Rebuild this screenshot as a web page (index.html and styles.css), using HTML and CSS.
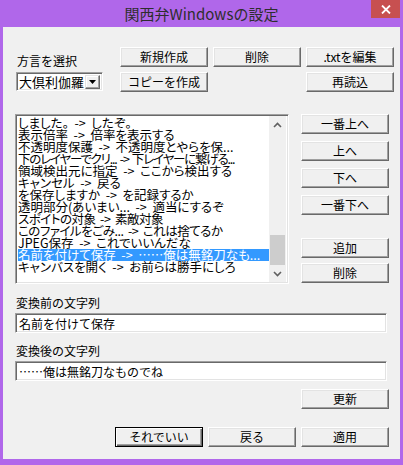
FILE: index.html
```html
<!DOCTYPE html>
<html lang="ja">
<head>
<meta charset="utf-8">
<title>関西弁Windowsの設定</title>
<link rel="stylesheet" href="styles.css">
</head>
<body>
<div class="window">
  <div class="titlebar">
    <span></span>
    <span class="title">関西弁Windowsの設定</span>
    <span class="ctrls">
      <span class="close"><svg width="10" height="9" viewBox="0 0 10 9"><path d="M1 0.5 L9 8.5 M9 0.5 L1 8.5" stroke="#fff" stroke-width="1.8" fill="none"/></svg></span>
    </span>
  </div>
  <div class="client">
    <div class="top">
      <div class="label dialect">方言を選択</div>
      <button class="btn">新規作成</button>
      <button class="btn">削除</button>
      <button class="btn">.txtを編集</button>
      <div class="combo">
        <span class="combo-text">大倶利伽羅</span>
        <span class="combo-btn"><svg width="7" height="4" viewBox="0 0 7 4"><path d="M0 0 H7 L3.5 4 Z" fill="#000"/></svg></span>
      </div>
      <button class="btn">コピーを作成</button>
      <span></span>
      <button class="btn">再読込</button>
    </div>

    <div class="main">
      <div class="list">
        <ul class="items">
          <li>しました。  -&gt;  したぞ。</li>
          <li>表示倍率  -&gt;  倍率を表示する</li>
          <li>不透明度保護  -&gt;  不透明度とやらを保...</li>
          <li class="tight">下のレイヤーでクリ...  -&gt;  下レイヤーに繋げる...</li>
          <li>領域検出元に指定  -&gt;  ここから検出する</li>
          <li>キャンセル  -&gt;  戻る</li>
          <li>を保存しますか  -&gt;  を記録するか</li>
          <li>透明部分(あいまい...  -&gt;  適当にするぞ</li>
          <li class="snug">スポイトの対象  -&gt;  素敵対象</li>
          <li class="snug">このファイルをごみ...  -&gt;  これは捨てるか</li>
          <li>JPEG保存  -&gt;  これでいいんだな</li>
          <li class="selected">名前を付けて保存  -&gt;  ……俺は無銘刀なも...</li>
          <li>キャンバスを開く  -&gt;  お前らは勝手にしろ</li>
        </ul>
        <div class="scrollbar">
          <div class="sb-arrow"><svg width="9" height="6" viewBox="0 0 9 6"><path d="M1 5 L4.5 1.5 L8 5" stroke="#606060" stroke-width="1.6" fill="none"/></svg></div>
          <div class="sb-track"><div class="sb-thumb"></div></div>
          <div class="sb-arrow"><svg width="9" height="6" viewBox="0 0 9 6"><path d="M1 1 L4.5 4.5 L8 1" stroke="#606060" stroke-width="1.6" fill="none"/></svg></div>
        </div>
      </div>
      <div class="side">
        <button class="btn">一番上へ</button>
        <button class="btn">上へ</button>
        <button class="btn">下へ</button>
        <button class="btn">一番下へ</button>
        <button class="btn add">追加</button>
        <button class="btn">削除</button>
      </div>
    </div>

    <div class="label field-label first">変換前の文字列</div>
    <div class="field">名前を付けて保存</div>
    <div class="label field-label">変換後の文字列</div>
    <div class="field">……俺は無銘刀なものでね</div>

    <div class="row update">
      <button class="btn">更新</button>
    </div>
    <div class="row bottom">
      <button class="btn default">それでいい</button>
      <button class="btn">戻る</button>
      <button class="btn">適用</button>
    </div>
  </div>
</div>
</body>
</html>
```

FILE: styles.css
```css
* { box-sizing: border-box; }
html, body {
  margin: 0;
  padding: 0;
}
body {
  width: 403px;
  height: 465px;
  overflow: hidden;
  font-family: "Noto Sans CJK JP", "Liberation Sans", sans-serif;
  font-size: 12px;
  color: #000;
}
.window {
  width: 403px;
  height: 465px;
  background: #b067ea;
  padding: 0 3px 6px 3px;
  display: flex;
  flex-direction: column;
}
.titlebar {
  height: 27px;
  display: grid;
  grid-template-columns: 1fr auto 1fr;
  margin: 0 -3px;
}
.title {
  font-size: 15px;
  line-height: 27px;
  color: #2e2e2e;
}
.ctrls {
  display: flex;
  justify-content: flex-end;
  align-items: flex-start;
  padding-right: 3px;
}
.close {
  width: 29px;
  height: 18px;
  background: #c75050;
  display: flex;
  align-items: center;
  justify-content: center;
}
.client {
  flex: 1;
  background: #f0f0f0;
  padding: 20px 11px 0 12px;
}
.label {
  line-height: 14px;
  white-space: nowrap;
}
.btn {
  font-family: inherit;
  font-size: 12px;
  line-height: 14px;
  color: #000;
  background: #f0f0f0;
  height: 20px;
  width: 88px;
  padding: 0;
  margin: 0;
  border: 1px solid;
  border-color: #fff #696969 #696969 #fff;
  box-shadow: inset -1px -1px #a0a0a0, inset 1px 1px #e3e3e3;
  border-radius: 0;
}
.btn.default {
  border-color: #000;
  box-shadow: inset 1px 1px #fff, inset -1px -1px #696969, inset -2px -2px #a0a0a0;
}
.top {
  display: grid;
  grid-template-columns: 100px 88px 88px 88px;
  column-gap: 5px;
  row-gap: 5px;
}
.dialect {
  align-self: end;
  padding-left: 2px;
  margin-bottom: -1px;
}
.combo {
  width: 87px;
  height: 19px;
  margin-left: 1px;
  background: #fff;
  border: 1px solid;
  border-color: #a0a0a0 #fff #fff #a0a0a0;
  box-shadow: inset 1px 1px #696969, inset -1px -1px #e3e3e3;
  display: flex;
  align-items: center;
  padding: 2px 2px 1px 2px;
}
.combo-text {
  flex: 1;
  line-height: 14px;
  font-size: 13px;
}
.combo-btn {
  width: 15px;
  height: 14px;
  background: #f0f0f0;
  border: 1px solid;
  border-color: #e3e3e3 #696969 #696969 #e3e3e3;
  box-shadow: inset -1px -1px #a0a0a0, inset 1px 1px #fff;
  display: flex;
  align-items: center;
  justify-content: center;
}
.main {
  display: grid;
  grid-template-columns: 274px 88px;
  column-gap: 12px;
  margin-top: 22px;
}
.list {
  height: 170px;
  background: #fff;
  border: 1px solid;
  border-color: #a0a0a0 #fff #fff #a0a0a0;
  box-shadow: inset 1px 1px #696969, inset -1px -1px #e3e3e3;
  padding: 2px 2px 2px 2px;
  display: flex;
}
.items {
  list-style: none;
  margin: 0;
  padding: 0;
  flex: 1;
  overflow: hidden;
  font-feature-settings: "palt";
  font-size: 12.5px;
}
.items li {
  height: 12px;
  line-height: 12px;
  white-space: pre;
  padding-left: 0;
}
.items li.tight {
  letter-spacing: -1.2px;
}
.items li.snug {
  letter-spacing: -0.5px;
}
.items li.selected {
  background: #3399ff;
  color: #fff;
}
.scrollbar {
  width: 17px;
  background: #f0f0f0;
  display: flex;
  flex-direction: column;
  margin: -1px 0;
}
.sb-arrow {
  height: 17px;
  display: flex;
  align-items: center;
  justify-content: center;
}
.sb-track {
  flex: 1;
  display: flex;
  flex-direction: column;
  justify-content: flex-end;
  padding: 0 1px;
}
.sb-thumb {
  height: 30px;
  background: #cdcdcd;
}
.side {
  display: flex;
  flex-direction: column;
  gap: 7px;
}
.side .add {
  margin-top: 16px;
}
.side .add + .btn {
  margin-top: -2px;
}
.field-label {
  padding-left: 1px;
  margin-top: 11px;
}
.field-label.first {
  margin-top: 12px;
}
.field {
  width: 372px;
  height: 20px;
  margin-top: 3px;
  background: #fff;
  border: 1px solid;
  border-color: #a0a0a0 #fff #fff #a0a0a0;
  box-shadow: inset 1px 1px #696969, inset -1px -1px #e3e3e3;
  padding: 2px 3px 0;
  line-height: 15px;
  font-size: 12px;
  white-space: nowrap;
}
.row {
  display: flex;
  justify-content: flex-end;
  gap: 5px;
}
.update {
  margin-top: 8px;
}
.bottom {
  margin-top: 18px;
}
```
